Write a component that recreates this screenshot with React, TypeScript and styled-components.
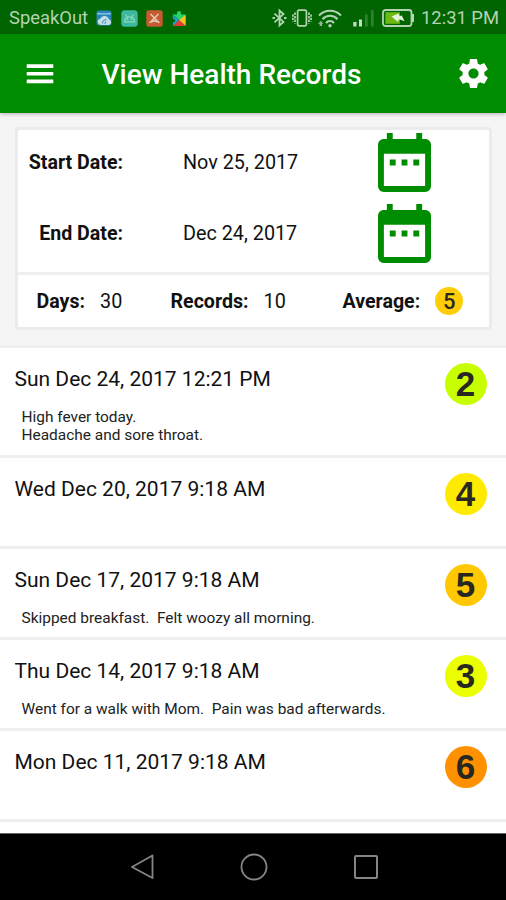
import React from "react";
import styled, { createGlobalStyle } from "styled-components";

const GlobalStyle = createGlobalStyle`
  * { box-sizing: border-box; }
  body { margin: 0; background: #fff; font-family: Roboto, "Noto Sans", sans-serif; }
  svg { display: block; flex: none; }
`;

const Screen = styled.div`
  width: 506px;
  height: 900px;
  display: flex;
  flex-direction: column;
  overflow: hidden;
  background: #fff;
  color: #111;
`;

const StatusBar = styled.div`
  flex: none;
  height: 34px;
  padding: 2px 8px 0 9px;
  display: flex;
  align-items: center;
  background: #006400;
  color: #b4d2b4;
`;

const StatusText = styled.span<{ $width: number }>`
  width: ${(p) => p.$width}px;
  font-size: 18.4px;
  line-height: 32px;
  white-space: nowrap;
`;

const AppIcons = styled.div`
  display: flex;
  gap: 8.2px;
  margin-left: 7.5px;
  flex: 1;
`;

const SystemIcons = styled.div`
  display: grid;
  grid-template-columns: 20px 25px 36px 29px 39px;
  align-items: center;
`;

const AppBar = styled.header`
  flex: none;
  position: relative;
  height: 79px;
  padding: 0 15px 0 26px;
  display: flex;
  align-items: center;
  background: #008c00;
  color: #fff;
  box-shadow: 0 1px 4px rgba(40, 0, 40, 0.3);
`;

const MenuButton = styled.div`
  width: 75.5px;
  display: flex;
`;

const Title = styled.h1`
  margin: 0;
  flex: 1;
  font-size: 28px;
  font-weight: 500;
  line-height: 34px;
  white-space: nowrap;
  padding-top: 2px;
`;

const Summary = styled.section`
  flex: none;
  height: 232px;
  padding: 14px 14px 0 15px;
  background: #f5f5f5;
`;

const Card = styled.div`
  height: 203px;
  border: 3px solid #ebebeb;
  border-radius: 4px;
  background: #fff;
`;

const Dates = styled.div`
  height: 142px;
  padding-top: 3px;
  display: flex;
  flex-direction: column;
  gap: 11.5px;
`;

const DateRow = styled.div`
  height: 59px;
  display: grid;
  grid-template-columns: 105px 60px 195px 53px;
  align-items: center;
`;

const Label = styled.span`
  font-size: 19.6px;
  font-weight: 700;
  text-align: right;
  white-space: nowrap;
`;

const Value = styled.span`
  font-size: 19.8px;
  white-space: nowrap;
`;

const DateValue = styled(Value)`
  grid-column: 3;
`;

const Totals = styled.div`
  height: 55px;
  border-top: 3px solid #eee;
  padding-left: 18.5px;
  display: grid;
  grid-template-columns: 134px 172px 1fr;
  align-items: center;
`;

const Total = styled.div`
  display: flex;
  align-items: center;
  gap: 15px;
`;

const Badge = styled.span<{ $color: string; $small?: boolean }>`
  flex: none;
  width: ${(p) => (p.$small ? 28 : 42)}px;
  height: ${(p) => (p.$small ? 28 : 42)}px;
  border-radius: 50%;
  display: flex;
  align-items: center;
  justify-content: center;
  padding-top: ${(p) => (p.$small ? 1 : 0)}px;
  background: ${(p) => p.$color};
  color: #282820;
  font-family: ${(p) => (p.$small ? "Roboto" : '"Liberation Sans"')}, sans-serif;
  font-size: ${(p) => (p.$small ? 22 : 35)}px;
  font-weight: ${(p) => (p.$small ? 500 : 700)};
`;

const Records = styled.main`
  flex: 1;
  min-height: 0;
  overflow: hidden;
  border-top: 3px solid #efefef;
`;

const Record = styled.article<{ $height: number }>`
  height: ${(p) => p.$height}px;
  border-bottom: 3px solid #eee;
  padding: 15px 19.5px 0 14.5px;
  display: flex;
  justify-content: space-between;
  align-items: flex-start;
`;

const RecordDate = styled.div`
  padding-top: 1px;
  font-size: 21px;
  line-height: 30px;
  white-space: nowrap;
`;

const Note = styled.div`
  margin: 13.5px 0 0 7px;
  font-size: 15.45px;
  line-height: 18.3px;
  color: #222;
  white-space: pre;
`;

const NavBar = styled.nav`
  flex: none;
  height: 67px;
  padding-left: 1.5px;
  border-top: 1px solid #666;
  background: #000;
  display: flex;
  align-items: center;
  justify-content: center;
  gap: 84px;
`;

const CalendarIcon = () => (
  <svg width="53" height="59" viewBox="3 2 18 20" fill="#008c00">
    <path d="M9 11H7v2h2v-2zm4 0h-2v2h2v-2zm4 0h-2v2h2v-2zm2-7h-1V2h-2v2H8V2H6v2H5c-1.11 0-1.99.9-1.99 2L3 20c0 1.1.89 2 2 2h14c1.1 0 2-.9 2-2V6c0-1.1-.9-2-2-2zm0 16H5V9h14v11z" />
  </svg>
);

const MenuIcon = () => (
  <svg width="28" height="20" viewBox="0 0 28 20" fill="#fff">
    <path d="M.7.3h26.600v3.600H.7zM.7 8h26.600v3.400H.7zM.7 15.600h26.600v3.600H.7z" />
  </svg>
);

const GearIcon = () => (
  <svg width="35" height="35" viewBox="0 0 24 24" fill="#fff">
    <path d="M19.43 12.98c.04-.32.07-.64.07-.98s-.03-.66-.07-.98l2.11-1.65c.19-.15.24-.42.12-.64l-2-3.46c-.12-.22-.39-.3-.61-.22l-2.49 1c-.52-.4-1.08-.73-1.69-.98l-.38-2.65C14.46 2.18 14.25 2 14 2h-4c-.25 0-.46.18-.49.42l-.38 2.65c-.61.25-1.17.59-1.69.98l-2.49-1c-.23-.09-.49 0-.61.22l-2 3.46c-.13.22-.07.49.12.64l2.11 1.65c-.04.32-.07.65-.07.98s.03.66.07.98l-2.11 1.65c-.19.15-.24.42-.12.64l2 3.46c.12.22.39.3.61.22l2.49-1c.52.4 1.08.73 1.69.98l.38 2.65c.03.24.24.42.49.42h4c.25 0 .46-.18.49-.42l.38-2.65c.61-.25 1.17-.59 1.69-.98l2.49 1c.23.09.49 0 .61-.22l2-3.46c.12-.22.07-.49-.12-.64l-2.11-1.65zM12 15.500c-1.930 0-3.500-1.570-3.500-3.500s1.570-3.500 3.500-3.500 3.500 1.570 3.500 3.500-1.570 3.500-3.500 3.500z" />
  </svg>
);

const CloudAppIcon = () => (
  <svg width="17" height="17" viewBox="0 0 17 17">
    <rect x=".5" y=".5" width="15" height="15" rx="2.5" fill="#2b83b8" />
    <path d="M1 3.8h14" stroke="#7fc0dc" strokeWidth="1.6" />
    <path d="M4.5 15a3.2 3.2 0 0 1-.4-6.3 4.7 4.7 0 0 1 8.8.6 3 3 0 0 1 .3 5.7z" fill="#c5dfe4" />
    <path d="M6.5 13.5c.3-3 1.5-4 4-3.8M8.8 13.8l1-2.2" stroke="#2b83b8" fill="none" />
  </svg>
);

const AndroidAppIcon = () => (
  <svg width="17" height="17" viewBox="0 0 17 17">
    <rect x=".3" y=".3" width="16.4" height="16.4" rx="3.5" fill="#3cb8a0" />
    <path d="M3.5 11.8a5 5 0 0 1 10 0zM4.5 4.500l1.700 2.300M12.500 4.500l-1.700 2.300" fill="none" stroke="#93d8b4" strokeWidth="1.2" />
    <path d="M6 9.200h1.200M9.800 9.200H11" stroke="#b0e2c4" strokeWidth="1.2" />
  </svg>
);

const ToolsAppIcon = () => (
  <svg width="17" height="17" viewBox="0 0 17 17">
    <rect x=".3" y=".3" width="16.4" height="16.4" rx="2.5" fill="#c65b32" />
    <path d="m4.500 4 7.200 7.200M12.500 4l-7.200 7.200M3.600 12.800c1.800-2.400 8-2.400 9.800 0" fill="none" stroke="#e4cdb4" strokeWidth="1.5" />
  </svg>
);

const PuzzleAppIcon = () => (
  <svg width="17" height="17" viewBox="0 0 17 17">
    <path d="M1 4.500h5V3a2 2 0 1 1 4 0v1.500h4.500V8L8.500 10z" fill="#27d36b" />
    <path d="M1.500 5.500 8.300 10 2 16v-3.700c3-.3 3-3.300 0-3.600z" fill="#1ca2dc" />
    <path d="M2 16 8.300 9.500 14.500 16z" fill="#df3c3a" />
    <path d="M8 9.800 14.700 5v11z" fill="#f0c41e" />
  </svg>
);

const BluetoothIcon = () => (
  <svg width="16" height="20" viewBox="0 0 16 20" fill="none" stroke="#b4d2b4" strokeWidth="1.8">
    <path d="m2.500 5.600 9 8.300L7.500 17.500v-15l4 3.600-9 8.300" />
    <path d="M.5 10h2.500M12 10h2.500" strokeWidth="2.200" />
  </svg>
);

const VibrateIcon = () => (
  <svg width="20" height="18" viewBox="0 0 20 18" fill="none" stroke="#b4d2b4" strokeWidth="1.700">
    <rect x="5.600" y="1.200" width="8.800" height="15.600" rx="1.300" />
    <path d="M3 3.500v11M17 3.500v11" strokeDasharray="2.500 1" />
    <path d="M.9 5.500v7M19.100 5.500v7" strokeDasharray="2.200 1" />
  </svg>
);

const WifiIcon = () => (
  <svg width="26" height="19" viewBox="0 0 26 19" fill="none" stroke="#b4d2b4" strokeWidth="2">
    <path d="M2 6.500C8.300.3 17.700.3 24 6.500M5.500 10.300c4.300-4.600 10.700-4.600 15 0M9 14c2.200-2.600 5.800-2.600 8 0" />
    <circle cx="13" cy="16.800" r="1.700" fill="#b4d2b4" stroke="none" />
    <path d="m3.800 11.800 2.600 3H5V17H2.700v-2.200H1z" fill="#8fb98f" stroke="none" />
  </svg>
);

const SignalIcon = () => (
  <svg width="21" height="18" viewBox="0 0 21 18">
    <path d="M.3 13h3.200v4.500H.3zM6 10.500h3v7H6z" fill="#c4dcc4" />
    <path d="M12 5.500h2.700v12H12zM18 1h2.600v16.500H18z" fill="#308230" />
  </svg>
);

const BatteryIcon = () => (
  <svg width="33" height="18" viewBox="0 0 33 18">
    <rect x="1" y="1" width="28.500" height="16" rx="2.500" fill="none" stroke="#b4d2b4" strokeWidth="1.800" />
    <path d="M30 5h2v8h-2z" fill="#b4d2b4" />
    <path d="M3.300 3.200h14.500v11.600H3.300z" fill="#6fb914" />
    <path d="m9.500 7.500 7-3 1.300 3 1.800-1.200 3 6-5.300-2-1.500 2.500z" fill="#e5f3dc" />
  </svg>
);

const records = [
  { date: "Sun Dec 24, 2017 12:21 PM", note: "High fever today.\nHeadache and sore throat.", score: 2, color: "#c8ff00", height: 110 },
  { date: "Wed Dec 20, 2017 9:18 AM", note: "", score: 4, color: "#ffeb00", height: 91 },
  { date: "Sun Dec 17, 2017 9:18 AM", note: "Skipped breakfast.  Felt woozy all morning.", score: 5, color: "#ffc800", height: 91 },
  { date: "Thu Dec 14, 2017 9:18 AM", note: "Went for a walk with Mom.  Pain was bad afterwards.", score: 3, color: "#ebff00", height: 91 },
  { date: "Mon Dec 11, 2017 9:18 AM", note: "", score: 6, color: "#ff9100", height: 91 },
];

export default function App() {
  return (
    <Screen>
      <GlobalStyle />
      <StatusBar>
        <StatusText $width={79}>SpeakOut</StatusText>
        <AppIcons>
          <CloudAppIcon />
          <AndroidAppIcon />
          <ToolsAppIcon />
          <PuzzleAppIcon />
        </AppIcons>
        <SystemIcons>
          <BluetoothIcon />
          <VibrateIcon />
          <WifiIcon />
          <SignalIcon />
          <BatteryIcon />
        </SystemIcons>
        <StatusText $width={77}>12:31 PM</StatusText>
      </StatusBar>
      <AppBar>
        <MenuButton><MenuIcon /></MenuButton>
        <Title>View Health Records</Title>
        <GearIcon />
      </AppBar>
      <Summary>
        <Card>
          <Dates>
            <DateRow>
              <Label>Start Date:</Label>
              <DateValue>Nov 25, 2017</DateValue>
              <CalendarIcon />
            </DateRow>
            <DateRow>
              <Label>End Date:</Label>
              <DateValue>Dec 24, 2017</DateValue>
              <CalendarIcon />
            </DateRow>
          </Dates>
          <Totals>
            <Total><Label>Days:</Label><Value>30</Value></Total>
            <Total><Label>Records:</Label><Value>10</Value></Total>
            <Total><Label>Average:</Label><Badge $small $color="#ffcd0a">5</Badge></Total>
          </Totals>
        </Card>
      </Summary>
      <Records>
        {records.map((r) => (
          <Record key={r.date} $height={r.height}>
            <div>
              <RecordDate>{r.date}</RecordDate>
              {r.note && <Note>{r.note}</Note>}
            </div>
            <Badge $color={r.color}>{r.score}</Badge>
          </Record>
        ))}
      </Records>
      <NavBar>
        <svg width="28" height="28" viewBox="0 0 28 28" fill="none" stroke="#858585" strokeWidth="1.800" strokeLinejoin="round">
          <path d="M24.500 2.500v22.500L4 14z" />
        </svg>
        <svg width="28" height="28" viewBox="0 0 28 28" fill="none" stroke="#858585" strokeWidth="1.800">
          <circle cx="14" cy="14" r="12.500" />
        </svg>
        <svg width="28" height="28" viewBox="0 0 28 28" fill="none" stroke="#858585" strokeWidth="2">
          <rect x="3" y="3" width="22" height="22" rx="1" />
        </svg>
      </NavBar>
    </Screen>
  );
}
